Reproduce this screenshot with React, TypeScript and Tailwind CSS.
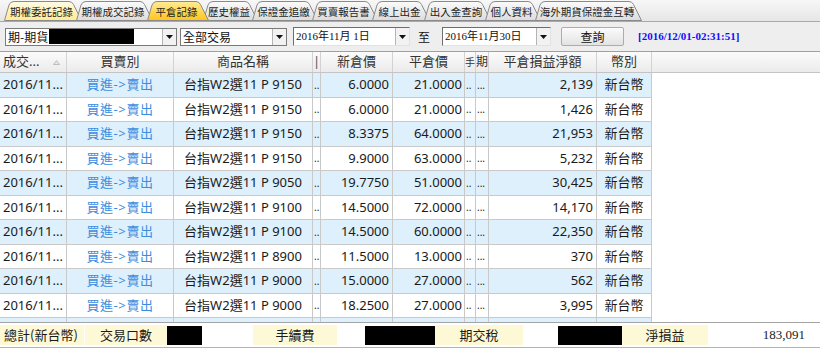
import React from "react";

const GRID_FONT = "font-['Noto_Sans','Noto_Sans_CJK_TC',sans-serif]";
const CJK_FONT = "font-['Noto_Sans_CJK_TC','Noto_Sans',sans-serif]";
const SERIF_FONT = "font-['Liberation_Serif','Noto_Sans_CJK_TC',serif]";

const TABS = [
  { label: "期權委託記錄", w: 78, from: "#fffce6", to: "#ffeb94" },
  { label: "期權成交記錄", w: 77, from: "#fbfbfb", to: "#dcdcdc" },
  { label: "平倉記錄", w: 62, from: "#ffec96", to: "#ffc41c", active: true },
  { label: "歷史權益", w: 55, from: "#fbfbfb", to: "#dcdcdc" },
  { label: "保證金追繳", w: 66, from: "#fbfbfb", to: "#dcdcdc" },
  { label: "買賣報告書", w: 66, from: "#fbfbfb", to: "#dcdcdc" },
  { label: "線上出金", w: 58, from: "#fbfbfb", to: "#dcdcdc" },
  { label: "出入金查詢", w: 67, from: "#fbfbfb", to: "#dcdcdc" },
  { label: "個人資料", w: 56, from: "#fbfbfb", to: "#dcdcdc" },
  { label: "海外期貨保證金互轉", w: 107, from: "#fbfbfb", to: "#dcdcdc" },
];

const COLS = [
  { w: "w-[67px]", head: "成交...", cell: "justify-start pl-[3px]" },
  { w: "w-[107px]", head: "買賣別", cell: "justify-center text-[#3b8de0] tracking-[0.6px]" },
  { w: "w-[139px]", head: "商品名稱", cell: "justify-center" },
  { w: "w-[8px]", head: "|", cell: "justify-start pl-[1px]" },
  { w: "w-[72px]", head: "新倉價", cell: "justify-end pr-[3px]" },
  { w: "w-[72px]", head: "平倉價", cell: "justify-end pr-[2px]" },
  { w: "w-[11px]", head: "手", cell: "justify-start pl-[1px]" },
  { w: "w-[13px]", head: "期", cell: "justify-start pl-[1px]" },
  { w: "w-[108px]", head: "平倉損益淨額", cell: "justify-end pr-[3px]" },
  { w: "w-[55px]", head: "幣別", cell: "justify-center" },
];

const ROWS = [
  ["9150", "6.0000", "21.0000", "2,139"],
  ["9150", "6.0000", "21.0000", "1,426"],
  ["9150", "8.3375", "64.0000", "21,953"],
  ["9150", "9.9000", "63.0000", "5,232"],
  ["9050", "19.7750", "51.0000", "30,425"],
  ["9100", "14.5000", "72.0000", "14,170"],
  ["9100", "14.5000", "60.0000", "22,350"],
  ["8900", "11.5000", "13.0000", "370"],
  ["9000", "15.0000", "27.0000", "562"],
  ["9000", "18.2500", "27.0000", "3,995"],
];

function Tab({ label, w, from, to, active, idx }: { label: string; w: number; from: string; to: string; active?: boolean; idx: number }) {
  const d = `M0.5 19.5 L5 4 Q6.2 0.5 10 0.5 L${w - 13} 0.5 Q${w - 10} 0.5 ${w - 8.5} 3.5 L${w - 0.5} 19.5 Z`;
  const id = `tabfill${idx}`;
  return (
    <div className={`grid ${idx === 0 ? "" : "-ml-[6px]"} ${active ? "z-10" : ""}`}>
      <svg width={w} height={20} className="[grid-area:1/1]">
        <defs>
          <linearGradient id={id} x1="0" y1="0" x2="0" y2="1">
            <stop offset="0" stopColor={from} />
            <stop offset="1" stopColor={to} />
          </linearGradient>
        </defs>
        <path d={d} fill={`url(#${id})`} stroke="#8a8a8a" />
      </svg>
      <div className={`[grid-area:1/1] flex items-center justify-center pl-[1px] pr-[4px] pt-[1px] text-[10.5px] text-[#1e1e1e] ${CJK_FONT}`}>
        {label}
      </div>
    </div>
  );
}

function DropArrow() {
  return (
    <div className="flex h-full w-[14px] items-center justify-center border-l border-[#b4b4b4] bg-[#f2f2f2]">
      <svg width="7" height="4" viewBox="0 0 7 4">
        <path d="M0 0 H7 L3.5 4 Z" fill="#111" />
      </svg>
    </div>
  );
}

export default function App() {
  return (
    <div className="h-[352px] w-[820px] overflow-hidden bg-[#eeeeee]">
      {/* tabs */}
      <div className="flex h-[22px] items-end border-b border-[#a9a9a9] bg-gradient-to-b from-[#f7f7f7] to-[#e6e6e6] pl-[4px]">
        {TABS.map((t, i) => (
          <Tab key={t.label} idx={i} {...t} />
        ))}
      </div>

      {/* filter bar */}
      <div className={`flex h-[29px] items-center bg-[#eeeeee] pl-[5px] text-[12px] text-[#111] ${CJK_FONT}`}>
        <div className="flex h-[18px] w-[172px] items-stretch border border-[#7a7a7a] bg-white">
          <div className="flex flex-1 items-center pl-[2px]">
            <span>期-期貨</span>
            <span className="ml-[1px] h-[15px] w-[85px] bg-black" />
          </div>
          <DropArrow />
        </div>
        <div className="ml-[3px] flex h-[18px] w-[107px] items-stretch border border-[#7a7a7a] bg-white">
          <div className="flex flex-1 items-center pl-[2px]">全部交易</div>
          <DropArrow />
        </div>
        <div className="ml-[6px] flex h-[19px] w-[117px] items-stretch border border-t-[#6e6e6e] border-l-[#6e6e6e] border-r-[#e2e2e2] border-b-[#e2e2e2] bg-white">
          <div className={`flex flex-1 items-center pl-[2px] text-[11px] ${SERIF_FONT}`}>2016年11月 1日</div>
          <DropArrow />
        </div>
        <span className="ml-[8px] text-[12px]">至</span>
        <div className="ml-[12px] flex h-[19px] w-[109px] items-stretch border border-t-[#6e6e6e] border-l-[#6e6e6e] border-r-[#e2e2e2] border-b-[#e2e2e2] bg-white">
          <div className={`flex flex-1 items-center pl-[2px] text-[11px] ${SERIF_FONT}`}>2016年11月30日</div>
          <DropArrow />
        </div>
        <button className="ml-[10px] flex h-[19px] w-[63px] items-center justify-center rounded-[2px] border border-[#acacac] bg-gradient-to-b from-[#fbfbfb] to-[#e3e3e3] text-[12px]">
          查詢
        </button>
        <span className={`ml-[14px] text-[11px] font-bold text-[#1010ff] ${SERIF_FONT}`}>[2016/12/01-02:31:51]</span>
      </div>

      {/* grid header */}
      <div className={`flex h-[22px] border-t border-b border-t-[#a0a0a0] border-b-[#c4c4c4] bg-gradient-to-b from-[#fbfbfb] to-[#ebebeb] text-[13px] text-[#333] ${GRID_FONT}`}>
        {COLS.map((c, i) => (
          <div
            key={c.head}
            className={`${c.w} flex shrink-0 items-center overflow-hidden whitespace-nowrap border-r border-[#d2d2d2] ${
              i === 0 ? "justify-between pl-[3px] pr-[6px]" : i === 6 || i === 7 ? "justify-start" : "justify-center"
            } ${i === 3 ? "text-[#555]" : ""} ${i === 6 ? "text-[10px]" : ""} ${i === 7 ? "text-[12px]" : ""}`}
          >
            <span>{c.head}</span>
            {i === 0 && (
              <svg width="7" height="5" viewBox="0 0 7 5">
                <path d="M3.5 0.5 L6.5 4.5 H0.5 Z" fill="#e6e6e6" stroke="#b4b4b4" strokeWidth="0.8" />
              </svg>
            )}
          </div>
        ))}
      </div>

      {/* rows */}
      <div className={`bg-white text-[13px] text-[#1a1a1a] ${GRID_FONT}`}>
        {ROWS.map((r, ri) => {
          const values = [
            "2016/11...",
            "買進->賣出",
            `台指W2選11 P ${r[0]}`,
            "..",
            r[1],
            r[2],
            "..",
            "...",
            r[3],
            "新台幣",
          ];
          return (
            <div key={ri} className={`flex ${ri % 2 === 0 ? "h-[25px]" : "h-[24px]"}`}>
              {COLS.map((c, ci) => (
                <div
                  key={ci}
                  className={`${c.w} ${c.cell} flex shrink-0 items-center overflow-hidden whitespace-nowrap border-r border-b border-[#c9c9c9] ${
                    ri % 2 === 0 ? "bg-[#ddf0fc]" : "bg-white"
                  } ${ci === 3 || ci === 6 || ci === 7 ? "text-[10px]" : ""}`}
                >
                  {values[ci]}
                </div>
              ))}
            </div>
          );
        })}
        <div className="flex h-[4px]">
          {COLS.map((c, ci) => (
            <div key={ci} className={`${c.w} shrink-0 border-r border-[#c9c9c9] bg-[#ddf0fc]`} />
          ))}
        </div>
      </div>

      {/* totals */}
      <div className={`flex h-[25px] items-center border-t border-[#a4a4a4] bg-white text-[13px] text-[#1a1a1a] ${CJK_FONT}`}>
        <div className="flex h-[20px] w-[85px] items-center border-r border-white bg-[#fdf8d6] pl-[4px]">總計(新台幣)</div>
        <div className="flex h-[20px] w-[82px] items-center justify-center bg-[#fdf8d6]">交易口數</div>
        <div className="h-[19px] w-[35px] bg-black" />
        <div className="w-[51px]" />
        <div className="flex h-[20px] w-[84px] items-center justify-center bg-[#fdf8d6]">手續費</div>
        <div className="w-[28px]" />
        <div className="h-[19px] w-[70px] bg-black" />
        <div className="flex h-[20px] w-[88px] items-center justify-center bg-[#fdf8d6]">期交稅</div>
        <div className="w-[35px]" />
        <div className="h-[19px] w-[64px] bg-black" />
        <div className="flex h-[20px] w-[86px] items-center justify-center bg-[#fdf8d6]">淨損益</div>
        <div className={`flex h-[20px] w-[100px] items-center justify-end pr-[3px] ${SERIF_FONT}`}>183,091</div>
      </div>
      <div className="h-[5px] border-t border-[#b4b4b4] bg-white" />
    </div>
  );
}
